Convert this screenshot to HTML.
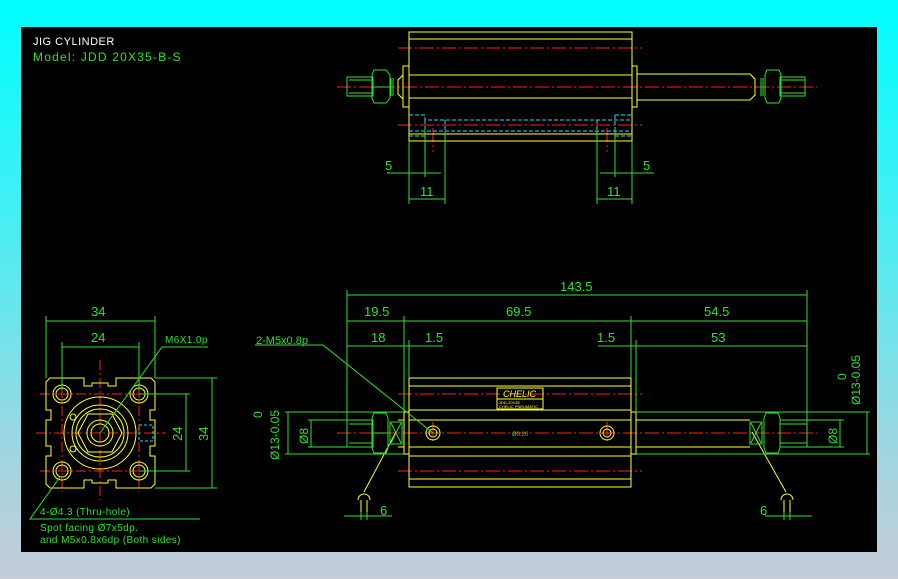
<!DOCTYPE html>
<html><head><meta charset="utf-8"><style>
html,body{margin:0;padding:0;width:898px;height:579px;overflow:hidden}
body{background:linear-gradient(180deg,#00ffff 0%,#40f0f4 35%,#9ad8e2 75%,#c6ccd8 100%)}
svg{position:absolute;left:0;top:0}
text{font-family:"Liberation Sans",sans-serif}
</style></head><body>
<svg width="898" height="579" viewBox="0 0 898 579">
<rect x="21" y="27" width="856" height="525" fill="#000"/>
<text x="33" y="45" fill="#fff" font-size="11" letter-spacing="0.5">JIG CYLINDER</text>
<text x="33" y="61" fill="#2fe02f" font-size="12" letter-spacing="1.2">Model: JDD 20X35-B-S</text>

<!-- TOP VIEW -->
<g fill="none" stroke-width="1">
<g stroke="#ff2020" stroke-dasharray="14,3,2,3">
<line x1="398" y1="48" x2="642" y2="48"/><line x1="337" y1="87" x2="817" y2="87"/><line x1="398" y1="125" x2="642" y2="125"/>
<line x1="433" y1="128" x2="433" y2="152"/><line x1="607" y1="128" x2="607" y2="152"/>
</g>
<g stroke="#ffff30">
<rect x="409" y="32" width="223" height="109"/>
<line x1="409" y1="39" x2="632" y2="39"/><line x1="409" y1="75" x2="632" y2="75"/><line x1="409" y1="98" x2="632" y2="98"/><line x1="409" y1="134" x2="632" y2="134"/>
<rect x="403" y="66" width="6" height="41"/><rect x="632" y="66" width="5" height="41"/>
<path d="M637 74 H750 L755 79 V95 L750 100 H637"/>
<path d="M403 75 L398 80 V94 L403 99"/>
</g>
<g stroke="#2fe02f">
<rect x="347" y="77" width="26" height="19"/><line x1="349" y1="80" x2="373" y2="80"/><line x1="349" y1="93" x2="373" y2="93"/>
<path d="M374 70 H386 L390 75 V98 L386 103 H374 L372 98 V75 Z"/><line x1="372" y1="87" x2="390" y2="87"/>
<line x1="391" y1="78" x2="391" y2="96"/><line x1="393" y1="78" x2="393" y2="96"/>
<rect x="780" y="77" width="25" height="19"/><line x1="780" y1="80" x2="805" y2="80"/><line x1="780" y1="93" x2="805" y2="93"/>
<path d="M767 70 H779 L781 75 V98 L779 103 H767 L765 98 V75 Z"/>
<line x1="761" y1="78" x2="761" y2="96"/><line x1="763" y1="78" x2="763" y2="96"/>
</g>
<g stroke="#30d8e8" stroke-dasharray="4,2">
<path d="M409 115 H425 V120 H632"/><path d="M409 131 H632"/><path d="M425 120 V131 M445 120 V131 M597 120 V131 M615 115 V131 M615 115 H632"/>
<path d="M409 136 H425 M615 136 H632"/>
</g>
<g stroke="#2fe02f">
<line x1="409" y1="141" x2="409" y2="204"/><line x1="425" y1="131" x2="425" y2="177"/><line x1="445" y1="131" x2="445" y2="204"/>
<line x1="597" y1="131" x2="597" y2="204"/><line x1="615" y1="131" x2="615" y2="177"/><line x1="632" y1="141" x2="632" y2="204"/>
<line x1="387" y1="173" x2="441" y2="173"/><line x1="600" y1="173" x2="654" y2="173"/>
<line x1="409" y1="199" x2="445" y2="199"/><line x1="597" y1="199" x2="632" y2="199"/>
</g>
</g>
<g fill="#2fe02f" font-size="13">
<text x="385" y="170">5</text><text x="643" y="170">5</text>
<text x="420" y="196">11</text><text x="607" y="196">11</text>
</g>

<!-- SIDE VIEW -->
<g fill="none">
<g stroke="#ff2020" stroke-dasharray="10,3,2,3">
<line x1="36" y1="433" x2="166" y2="433"/><line x1="100" y1="360" x2="100" y2="500"/>
<line x1="62" y1="370" x2="62" y2="492"/><line x1="139" y1="370" x2="139" y2="492"/>
<line x1="40" y1="394" x2="160" y2="394"/><line x1="40" y1="471" x2="160" y2="471"/>
</g>
<g stroke="#ffff30">
<path d="M50 378 H84 V386 H92 V383 H108 V386 H116 V378 H151 L155 382 V410 H150 V420 H155 V446 H150 V456 H155 V484 L151 488 H116 V480 H108 V483 H92 V480 H84 V488 H50 L46 484 V456 H51 V446 H46 V420 H51 V410 H46 V382 Z"/>
<circle cx="62" cy="394" r="9"/><circle cx="62" cy="394" r="6"/>
<circle cx="139" cy="394" r="9"/><circle cx="139" cy="394" r="6"/>
<circle cx="62" cy="471" r="9"/><circle cx="62" cy="471" r="6"/>
<circle cx="139" cy="471" r="9"/><circle cx="139" cy="471" r="6"/>
<circle cx="100" cy="433" r="36"/><circle cx="100" cy="433" r="28"/><circle cx="100" cy="433" r="24"/>
<path d="M88 414 H112 L122 433 L112 452 H88 L78 433 Z"/>
<circle cx="100" cy="433" r="13"/><circle cx="100" cy="433" r="9"/>
<circle cx="73" cy="417" r="3"/><circle cx="73" cy="449" r="3"/>
</g>
<rect x="139" y="425" width="14" height="16" stroke="#30d8e8" stroke-dasharray="3,2"/>
<g stroke="#2fe02f">
<line x1="46" y1="316" x2="46" y2="378"/><line x1="155" y1="316" x2="155" y2="378"/>
<line x1="46" y1="321" x2="155" y2="321"/>
<line x1="62" y1="342" x2="62" y2="390"/><line x1="139" y1="342" x2="139" y2="390"/>
<line x1="62" y1="347" x2="139" y2="347"/>
<line x1="155" y1="378" x2="217" y2="378"/><line x1="155" y1="488" x2="217" y2="488"/>
<line x1="139" y1="394" x2="190" y2="394"/><line x1="139" y1="471" x2="190" y2="471"/>
<line x1="186" y1="394" x2="186" y2="471"/><line x1="212" y1="378" x2="212" y2="488"/>
<path d="M208 347 H162 L100 433"/>
<path d="M200 519 H30 L60 477"/>
</g>
</g>
<g fill="#2fe02f" font-size="13">
<text x="91" y="316">34</text><text x="91" y="342">24</text>
<text transform="translate(182,441) rotate(-90)">24</text>
<text transform="translate(208,441) rotate(-90)">34</text>
</g>
<g fill="#2fe02f" font-size="10" letter-spacing="0.4">
<text x="165" y="343">M6X1.0p</text>
<text x="40" y="515">4-Ø4.3 (Thru-hole)</text>
<text x="40" y="531">Spot facing Ø7x5dp.</text>
<text x="40" y="543">and M5x0.8x6dp (Both sides)</text>
</g>

<!-- FRONT VIEW -->
<g fill="none">
<g stroke="#ff2020" stroke-dasharray="14,3,2,3">
<line x1="398" y1="394" x2="642" y2="394"/><line x1="337" y1="433" x2="817" y2="433"/><line x1="398" y1="471" x2="642" y2="471"/>
<line x1="433" y1="422" x2="433" y2="444"/><line x1="607" y1="422" x2="607" y2="444"/>
</g>
<g stroke="#ffff30">
<rect x="409" y="378" width="222" height="109"/>
<line x1="409" y1="386" x2="631" y2="386"/><line x1="409" y1="410" x2="631" y2="410"/><line x1="409" y1="420" x2="631" y2="420"/>
<line x1="409" y1="447" x2="631" y2="447"/><line x1="409" y1="456" x2="631" y2="456"/><line x1="409" y1="479" x2="631" y2="479"/>
<rect x="404" y="412" width="5" height="42"/><rect x="631" y="412" width="5" height="42"/>
<path d="M404 420 H398 M404 447 H398"/>
<path d="M636 420 H750 M636 447 H750"/>
<circle cx="433" cy="433" r="7"/><circle cx="433" cy="433" r="4"/>
<circle cx="607" cy="433" r="7"/><circle cx="607" cy="433" r="4"/>
<rect x="497" y="388" width="46" height="21"/>
<line x1="497" y1="399" x2="543" y2="399"/>
<path d="M396 432 L364 492 M752 432 L786 492"/>
<path d="M358 500 A6 6 0 1 1 370 500 M361 500 V512 M367 500 V512"/>
<path d="M781 500 A6 6 0 1 1 793 500 M784 500 V512 M790 500 V512"/>
</g>
<g stroke="#2fe02f">
<rect x="347" y="420" width="26" height="27"/><line x1="349" y1="424" x2="373" y2="424"/><line x1="349" y1="443" x2="373" y2="443"/>
<path d="M374 413 H386 L388 418 V448 L386 453 H374 L372 448 V418 Z"/><line x1="372" y1="433" x2="388" y2="433"/>
<rect x="390" y="422" width="12" height="22"/><path d="M391 423 L401 443 M401 423 L391 443"/>
<rect x="780" y="420" width="27" height="27"/><line x1="780" y1="424" x2="807" y2="424"/><line x1="780" y1="443" x2="807" y2="443"/>
<path d="M766 413 H778 L780 418 V448 L778 453 H766 L764 448 V418 Z"/>
<rect x="750" y="422" width="12" height="22"/><path d="M751 423 L761 443 M761 423 L751 443"/>
<!-- dims -->
<line x1="347" y1="290" x2="347" y2="420"/><line x1="807" y1="290" x2="807" y2="420"/>
<line x1="347" y1="295" x2="807" y2="295"/>
<line x1="404" y1="316" x2="404" y2="412"/><line x1="409" y1="340" x2="409" y2="378"/>
<line x1="631" y1="316" x2="631" y2="378"/><line x1="636" y1="340" x2="636" y2="412"/>
<line x1="347" y1="321" x2="807" y2="321"/>
<line x1="347" y1="346" x2="404" y2="346"/><line x1="398" y1="346" x2="443" y2="346"/>
<line x1="598" y1="346" x2="643" y2="346"/><line x1="636" y1="346" x2="807" y2="346"/>
<line x1="285" y1="412" x2="404" y2="412"/><line x1="285" y1="454" x2="404" y2="454"/>
<line x1="308" y1="420" x2="347" y2="420"/><line x1="308" y1="447" x2="347" y2="447"/>
<line x1="288" y1="412" x2="288" y2="454"/><line x1="311" y1="420" x2="311" y2="447"/>
<line x1="636" y1="412" x2="870" y2="412"/><line x1="636" y1="454" x2="870" y2="454"/>
<line x1="807" y1="420" x2="844" y2="420"/><line x1="807" y1="447" x2="844" y2="447"/>
<line x1="867" y1="412" x2="867" y2="454"/><line x1="840" y1="420" x2="840" y2="447"/>
<path d="M255 345 H323 L433 433"/>
<line x1="344" y1="516" x2="392" y2="516"/><line x1="361" y1="512" x2="361" y2="520"/><line x1="367" y1="512" x2="367" y2="520"/>
<line x1="765" y1="516" x2="812" y2="516"/><line x1="784" y1="512" x2="784" y2="520"/><line x1="790" y1="512" x2="790" y2="520"/>
</g>
</g>
<g fill="#2fe02f" font-size="13">
<text x="560" y="291">143.5</text>
<text x="364" y="316">19.5</text><text x="506" y="316">69.5</text><text x="704" y="316">54.5</text>
<text x="371" y="342">18</text><text x="425" y="342">1.5</text><text x="597" y="342">1.5</text><text x="711" y="342">53</text>
<text x="380" y="515">6</text><text x="760" y="515">6</text>
<text x="256" y="344" font-size="11">2-M5x0.8p</text>
<text transform="translate(262,418) rotate(-90)" font-size="12">0</text>
<text transform="translate(279,460) rotate(-90)" font-size="12">Ø13-0.05</text>
<text transform="translate(308,444) rotate(-90)" font-size="12">Ø8</text>
<text transform="translate(846,380) rotate(-90)" font-size="12">0</text>
<text transform="translate(860,405) rotate(-90)" font-size="12">Ø13-0.05</text>
<text transform="translate(837,444) rotate(-90)" font-size="12">Ø8</text>
<text x="512" y="436" font-size="6">Ø0.20</text>
</g>
<g fill="#ffff30" font-size="9" font-style="italic"><text x="503" y="397">CHELIC</text></g>
<g fill="#ffff30" font-size="4"><text x="499" y="404">JDD-20X35</text><text x="499" y="408">CHELIC PNEUMATIC</text></g>
</svg>
</body></html>
